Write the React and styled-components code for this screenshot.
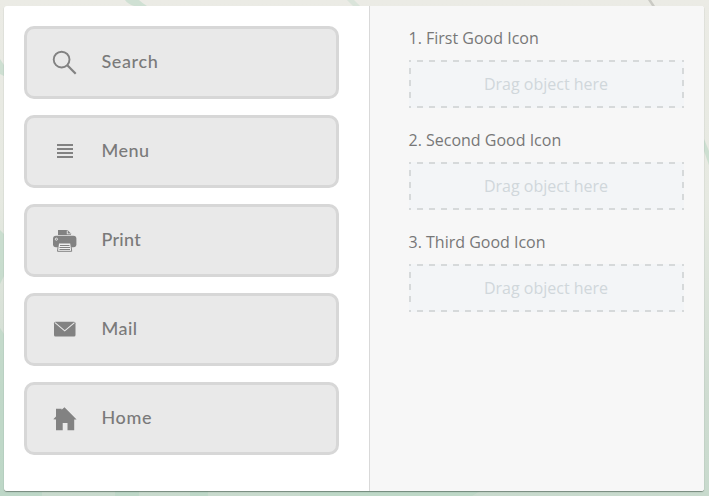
import React from 'react';
import styled, { createGlobalStyle } from 'styled-components';

const GlobalStyle = createGlobalStyle`
  * { box-sizing: border-box; }
  body { margin: 0; overflow: hidden; }
`;

const Page = styled.div`
  position: relative;
  width: 709px;
  height: 496px;
  padding: 6px 5px 5px 4px;
  background: linear-gradient(#ebebe5 0%, #e6e9e1 40%, #cfdcd1 80%, #c8dacd 100%);
`;

const Backdrop = styled.svg`
  position: absolute;
  inset: 0;
`;

const Panel = styled.main`
  display: flex;
  height: 485px;
  border-radius: 3px;
  overflow: hidden;
  background: #fff;
`;

const Shade = styled.div`
  position: relative;
  border-radius: 3px;
  box-shadow: 0 1px 1px rgba(60, 80, 70, 0.6);
`;

const Source = styled.section`
  display: flex;
  flex-direction: column;
  gap: 16px;
  width: 365px;
  padding: 20px 30px 20px 20px;
`;

const Card = styled.div`
  display: flex;
  align-items: center;
  height: 73px;
  padding-left: 21px;
  border: 3px solid #d7d7d7;
  border-radius: 10px;
  background: #e9e9e9;
`;

const Icon = styled.svg`
  flex: none;
  width: 32px;
  height: 32px;
  margin-top: -1px;
  color: #828282;
`;

const CardLabel = styled.span`
  margin: -4px 0 0 21.5px;
  color: #7a7a7a;
  font: 500 18px/24px Lato, sans-serif;
  letter-spacing: ${(p) => p.$tracking}px;
`;

const Targets = styled.section`
  display: flex;
  flex: 1;
  flex-direction: column;
  gap: 18px;
  padding: 18px 20px 0 38.5px;
  border-left: 1px solid #d9d9d9;
  background: #f7f7f7;
`;

const TargetTitle = styled.h2`
  height: 36px;
  margin: 0;
  color: #777;
  font: 400 16px/28px 'Open Sans', sans-serif;
`;

const DropZone = styled.div`
  position: relative;
  display: flex;
  align-items: center;
  justify-content: center;
  width: 275px;
  height: 48px;
  background: #f3f5f7;
  color: #d0d7db;
  font: 400 16px/24px 'Open Sans', sans-serif;
`;

const DashOutline = styled.svg`
  position: absolute;
  inset: 0;
  width: 275px;
  height: 48px;
`;

const icons = {
  search: (
    <g fill="none" stroke="currentColor" strokeWidth="1.9">
      <circle cx="13.6" cy="13.6" r="7.9" />
      <path d="M19.3 19.3L27.7 27.7" strokeWidth="2.2" />
    </g>
  ),
  menu: <path fill="currentColor" d="M9 9h16v2H9zM9 13h16v2H9zM9 17h16v2H9zM9 21h16v2H9z" />,
  print: (
    <g>
      <path fill="currentColor" d="M10 6h9.5l3.5 3.5V11H10z" />
      <path fill="#e9e9e9" d="M18.8 6.5v3.7H23v-.8h-3.3V6.5z" />
      <rect x="5" y="11.8" width="23.4" height="11.4" rx="3" fill="currentColor" />
      <circle cx="8.4" cy="15.2" r="1.1" fill="none" stroke="#e9e9e9" strokeWidth="0.9" />
      <path fill="#efefef" stroke="currentColor" strokeWidth="1" d="M10.5 19h12.2l1 8.3H9.5z" />
      <path stroke="currentColor" strokeWidth="1" d="M12 21.5h9.5M11.5 23.5h10.5M11.5 25.5h10.5" />
    </g>
  ),
  mail: (
    <g>
      <rect x="6" y="8.8" width="21.5" height="14.8" rx="1.5" fill="currentColor" />
      <path d="M7 9.6l9.7 8.2 9.8-8.2" fill="none" stroke="#e9e9e9" strokeWidth="1.1" />
    </g>
  ),
  home: (
    <path
      fill="currentColor"
      d="M5.3 17.3L8 14.6V6.8H13.6V7.8L16.5 5.2 28.6 17.4H26.2V28.2H19.5V21H14.7V28.2H8V17.5z"
    />
  ),
};

const cards = [
  { name: 'Search', icon: 'search', tracking: 0.6 },
  { name: 'Menu', icon: 'menu', tracking: 0.5 },
  { name: 'Print', icon: 'print', tracking: 0.25 },
  { name: 'Mail', icon: 'mail', tracking: 0.45 },
  { name: 'Home', icon: 'home', tracking: 0.6 },
];

const targets = ['1. First Good Icon', '2. Second Good Icon', '3. Third Good Icon'];

function Outline() {
  return (
    <DashOutline viewBox="0 0 275 48" fill="none" stroke="#d6d9da" strokeWidth="2">
      <path d="M8 1H268M8 47H268" strokeDasharray="6 6" />
      <path d="M1 8V42M274 8V42" strokeDasharray="6 6" />
      <path d="M0 1H2M273 1H275M0 47H2M273 47H275" />
    </DashOutline>
  );
}

export default function App() {
  return (
    <Page>
      <GlobalStyle />
      <Backdrop width="709" height="496" viewBox="0 0 709 496">
        <g fill="#b4d6c2" opacity="0.5">
          <path d="M125 0h14q3 3 8 6h-13q-6-2-9-6z" />
          <path d="M347 0h7l6 6h-7z" opacity="0.6" />
          <path d="M648 0h3l4 6h-3z" fill="#aaaaa5" />
          <path d="M0 59l4 6v11l-4-2zM0 230l4 4v42l-4 8zM0 328l4 6v162H0z" />
          <path d="M704 139l5 12v14l-5-14z" />
          <path d="M0 492h42v4H0zM115 491h24v5h-24zM190 491h18v5h-18zM300 491h180l-8 5H300z" />
        </g>
      </Backdrop>
      <Shade>
        <Panel>
          <Source>
            {cards.map((c) => (
              <Card key={c.name}>
                <Icon viewBox="0 0 32 32">{icons[c.icon]}</Icon>
                <CardLabel $tracking={c.tracking}>{c.name}</CardLabel>
              </Card>
            ))}
          </Source>
          <Targets>
            {targets.map((t) => (
              <div key={t}>
                <TargetTitle>{t}</TargetTitle>
                <DropZone>
                  <Outline />
                  Drag object here
                </DropZone>
              </div>
            ))}
          </Targets>
        </Panel>
      </Shade>
    </Page>
  );
}
